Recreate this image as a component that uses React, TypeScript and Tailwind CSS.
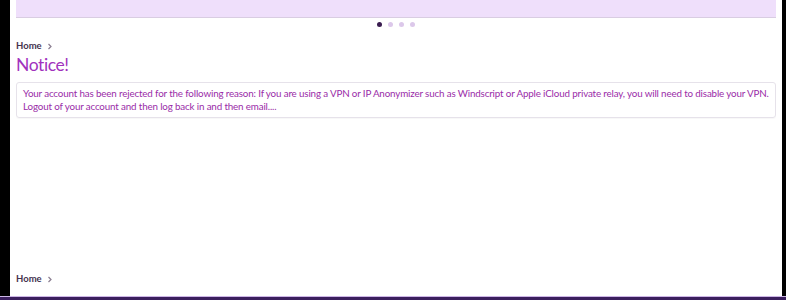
export default function App() {
  return (
    <div className="flex flex-col w-[786px] h-[300px] bg-black overflow-hidden" style={{ fontFamily: 'Lato, "Open Sans", sans-serif' }}>
      <div className="flex flex-1 min-h-0">
        <div className="w-[10px] bg-black" />
        <main className="flex-1 bg-white flex flex-col px-[6px]">
          {/* Slider banner */}
          <div className="h-[18px] bg-[#efdffb] border-b border-[#d9cde2]" />
          <div className="flex justify-center gap-[6px] mt-[4px]">
            <span className="w-[5px] h-[5px] rounded-full bg-[#3a1d50]" />
            <span className="w-[5px] h-[5px] rounded-full bg-[#dcc8ea]" />
            <span className="w-[5px] h-[5px] rounded-full bg-[#dcc8ea]" />
            <span className="w-[5px] h-[5px] rounded-full bg-[#dcc8ea]" />
          </div>

          <Breadcrumb className="mt-[13px]" />
          <h1 className="text-[17.5px] leading-[22px] tracking-[-0.4px] text-[#a132bd] mt-[2px]">Notice!</h1>

          <div className="mt-[6px] border border-[#e6e2ea] rounded-[3px] px-[6px] py-[4px] text-[9.8px] leading-[13px] tracking-[-0.15px] text-[#9a2ca8] shadow-[0_1px_1px_rgba(0,0,0,0.03)]">
            Your account has been rejected for the following reason: If you are using a VPN or IP Anonymizer such as Windscript or Apple iCloud private relay, you will need to disable your VPN. Logout of your account and then log back in and then email....
          </div>

          <div className="flex-1" />
          <Breadcrumb className="mb-[11px]" />
        </main>
        <div className="w-[4px] bg-black" />
      </div>
      <div className="h-[4px] bg-[#3b1f5e] border-t border-[#cdb6e6]" />
    </div>
  );
}

function Breadcrumb({ className = "" }: { className?: string }) {
  return (
    <div className={`flex items-center gap-[5px] text-[9.5px] leading-[12px] font-bold text-[#46324f] ${className}`}>
      <span>Home</span>
      <svg width="6" height="7" viewBox="0 0 6 7" fill="none" stroke="#8a7d90" strokeWidth="1.2">
        <path d="M1.5 1l2.5 2.5L1.5 6" />
      </svg>
    </div>
  );
}
